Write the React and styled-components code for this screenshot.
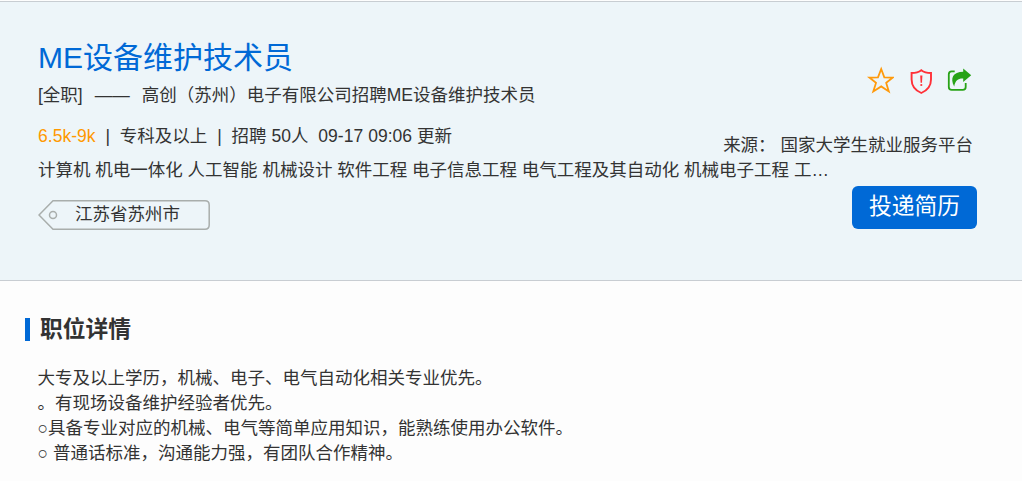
import React from "react";
import styled, { createGlobalStyle } from "styled-components";

const GlobalStyle = createGlobalStyle`
  * {
    box-sizing: border-box;
  }

  body {
    margin: 0;
    background: #fdfdfd;
    color: #333;
    font-family: "Liberation Sans", "Noto Sans CJK SC", sans-serif;
    font-size: 17.5px;
    line-height: 25px;
    overflow: hidden;
  }
`;

const Page = styled.div`
  width: 1022px;
  height: 481px;
  overflow: hidden;
  padding-top: 1px;
`;

const Hero = styled.header`
  display: grid;
  height: 280px;
  background: #edf5f9;
  border-top: 1px solid #c8cdd2;
  border-bottom: 1px solid #c8cdd2;
`;

/* both halves share one cell, the major list runs under the source line */
const Info = styled.div`
  grid-area: 1 / 1;
  padding: 35px 0 0 38px;
  white-space: pre;
`;

const Title = styled.h1`
  margin: 0;
  font-size: 30px;
  font-weight: 400;
  line-height: 42px;
  color: #0069d6;
`;

const Line = styled.div`
  height: 25px;
  margin-top: ${(p) => p.$top || 0}px;
  letter-spacing: ${(p) => p.$spacing || 0}px;
`;

const Company = styled.span`
  margin-left: 12px;
`;

const Salary = styled.span`
  color: #ff9900;
`;

const Tag = styled.div`
  display: grid;
  width: 172px;
  height: 30px;
  margin-top: 17px;
`;

const TagShape = styled.svg`
  grid-area: 1 / 1;
  display: block;
`;

const TagText = styled.span`
  grid-area: 1 / 1;
  padding-left: 37px;
  line-height: 28px;
`;

const Side = styled.div`
  grid-area: 1 / 1;
  justify-self: end;
  display: flex;
  flex-direction: column;
  align-items: flex-end;
  padding: 62px 45px 0 0;
`;

const Actions = styled.div`
  display: flex;
  height: 32px;
  margin-right: 3px;
`;

const Source = styled.div`
  margin: 37px 4px 0 0;
  white-space: pre;
`;

const ApplyButton = styled.button`
  width: 125px;
  height: 43px;
  margin-top: 28px;
  padding: 0 0 2px;
  border: 0;
  border-radius: 6px;
  background: #0069d6;
  color: #fff;
  font-family: inherit;
  font-size: 22.75px;
  line-height: 41px;
`;

const Detail = styled.section`
  padding: 35px 25px 0;
`;

const DetailTitle = styled.h2`
  display: flex;
  align-items: center;
  height: 26px;
  margin: 0;
  font-size: 22.75px;
  line-height: 26px;

  &::before {
    content: "";
    width: 5px;
    height: 23px;
    margin: 1px 10px 0 0;
    background: #0069d6;
  }
`;

const DetailText = styled.div`
  padding: 24px 0 0 12.5px;
  white-space: pre;
`;

const StarIcon = () => (
  <svg width="28" height="32" viewBox="0 0 28 32" fill="none">
    <path
      d="M15.2 5 L18.3 13.3 L26.8 13.5 L20.2 18.9 L22.8 27.4 L15.2 22.4 L7.3 27.4 L10 18.9 L3.4 13.5 L12 13.3 Z"
      stroke="#ff9a0c"
      strokeWidth="1.8"
    />
  </svg>
);

const ReportIcon = () => (
  <svg width="52" height="32" viewBox="0 0 52 32" fill="none">
    <path
      d="M27.3 6.2 C25 8 21.5 9 17.6 9 V15.5 C17.6 22.5 21.5 26.5 27.3 29 C33.1 26.5 37 22.5 37 15.5 V9 C33.1 9 29.6 8 27.3 6.2 Z"
      stroke="#ff3038"
      strokeWidth="1.9"
    />
    <path d="M26.2 11.5 H28.4 L28 18.8 H26.6 Z" fill="#ff3038" />
    <circle cx="27.3" cy="21" r="1.1" fill="#ff3038" />
  </svg>
);

const ShareIcon = () => (
  <svg width="28" height="32" viewBox="0 0 28 32" fill="none">
    <path
      d="M8.7 7.3 H5.7 Q2.8 7.3 2.8 10.2 V23 Q2.8 25.9 5.7 25.9 H16.8 Q19.7 25.9 19.7 23 V19"
      stroke="#28a317"
      strokeWidth="1.8"
    />
    <path
      d="M17.2 4.6 L25.2 11.2 L17.2 18 V14.6 C12 14.4 9.5 16.5 8.2 22.4 C3.8 14.5 7 7.8 17.2 7.8 Z"
      fill="#28a317"
    />
  </svg>
);

const details = [
  "大专及以上学历，机械、电子、电气自动化相关专业优先。",
  "。有现场设备维护经验者优先。",
  "○具备专业对应的机械、电气等简单应用知识，能熟练使用办公软件。",
  "○ 普通话标准，沟通能力强，有团队合作精神。",
];

const App = () => (
  <Page lang="zh-CN">
    <GlobalStyle />
    <Hero>
      <Info>
        <Title>ME设备维护技术员</Title>
        <Line $top={4}>
          [全职]
          <Company>——</Company>
          <Company>高创（苏州）电子有限公司招聘ME设备维护技术员</Company>
        </Line>
        <Line $top={16} $spacing={0.03}>
          <Salary>6.5k-9k</Salary>
          {"  |  专科及以上  |  招聘 50人  09-17 09:06 更新"}
        </Line>
        <Line $top={9} $spacing={-0.01}>
          计算机 机电一体化 人工智能 机械设计 软件工程 电子信息工程 电气工程及其自动化 机械电子工程 工…
        </Line>
        <Tag>
          <TagShape width="172" height="30" viewBox="0 0 172 30" fill="none" stroke="#a9aeac" strokeWidth="1.5">
            <path d="M15 0.8 H167 Q171.2 0.8 171.2 5 V25 Q171.2 29.2 167 29.2 H15 L1 15 Z" />
            <circle cx="15" cy="15" r="3.5" />
          </TagShape>
          <TagText>江苏省苏州市</TagText>
        </Tag>
      </Info>
      <Side>
        <Actions>
          <StarIcon />
          <ReportIcon />
          <ShareIcon />
        </Actions>
        <Source>来源： 国家大学生就业服务平台</Source>
        <ApplyButton>投递简历</ApplyButton>
      </Side>
    </Hero>
    <Detail>
      <DetailTitle>职位详情</DetailTitle>
      <DetailText>
        {details.map((text) => (
          <div key={text}>{text}</div>
        ))}
      </DetailText>
    </Detail>
  </Page>
);

export default App;
